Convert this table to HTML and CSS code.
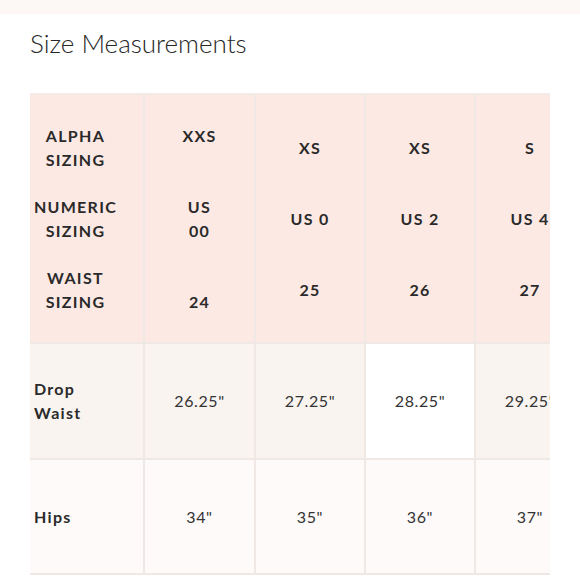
FILE: index.html
```html
<!DOCTYPE html>
<html>
<head>
<meta charset="utf-8">
<link rel="stylesheet" href="styles.css">
</head>
<body>
<div class="topband"></div>
<h1 class="title">Size Measurements</h1>
<div class="table-wrap">
  <div class="grid">
    <div class="cell head first">
      <div class="blk">ALPHA<br>SIZING</div>
      <div class="blk">NUMERIC<br>SIZING</div>
      <div class="blk">WAIST<br>SIZING</div>
    </div>
    <div class="cell head">
      <div class="blk">XXS<br>&nbsp;</div>
      <div class="blk">US<br>00</div>
      <div class="blk">&nbsp;<br>24</div>
    </div>
    <div class="cell head">
      <div class="blk">XS</div>
      <div class="blk">US 0</div>
      <div class="blk">25</div>
    </div>
    <div class="cell head">
      <div class="blk">XS</div>
      <div class="blk">US 2</div>
      <div class="blk">26</div>
    </div>
    <div class="cell head">
      <div class="blk">S</div>
      <div class="blk">US 4</div>
      <div class="blk">27</div>
    </div>

    <div class="cell r2 first label">Drop<br>Waist</div>
    <div class="cell r2 val">26.25"</div>
    <div class="cell r2 val">27.25"</div>
    <div class="cell r2 val white">28.25"</div>
    <div class="cell r2 val">29.25"</div>

    <div class="cell r3 first label">Hips</div>
    <div class="cell r3 val">34"</div>
    <div class="cell r3 val">35"</div>
    <div class="cell r3 val">36"</div>
    <div class="cell r3 val">37"</div>
  </div>
</div>
</body>
</html>
```

FILE: styles.css
```css
html, body {
  margin: 0;
  padding: 0;
  background: #ffffff;
}
body {
  font-family: "Lato", "Open Sans", sans-serif;
  color: #2a2a2a;
}
.topband {
  height: 14px;
  background: #fdf7f5;
}
.title {
  margin: 0;
  padding: 13px 0 0 30px;
  height: 79px;
  box-sizing: border-box;
  font-family: "Lato", sans-serif;
  font-weight: 300;
  font-size: 26px;
  line-height: 32px;
  color: #262626;
}
.table-wrap {
  margin-left: 30px;
  width: 520px;
  overflow: hidden;
  border-top: 2px solid #f3ebe7;
}
.grid {
  display: grid;
  grid-template-columns: 115px 111px 110px 110px 110px;
  grid-template-rows: 249px 116px 115px;
  width: 556px;
}
.cell {
  box-sizing: border-box;
  border-right: 2px solid #efe8e4;
  border-bottom: 2px solid #efe8e4;
  display: flex;
  align-items: center;
  justify-content: center;
  text-align: center;
  font-size: 16px;
  line-height: 24px;
}
.head {
  background: #fde9e4;
  flex-direction: column;
  gap: 23px;
  font-weight: 700;
  letter-spacing: 1.3px;
}
.head.first {
  padding: 0 26px 0 4px;
}
.blk {
  height: 48px;
  display: flex;
  align-items: center;
  justify-content: center;
}
.r2 {
  background: #f9f4f0;
}
.r3 {
  background: #fefaf9;
}
.white {
  background: #ffffff;
}
.label {
  justify-content: flex-start;
  text-align: left;
  padding-left: 4px;
  font-weight: 700;
  letter-spacing: 1.3px;
}
.val {
  font-weight: 400;
  letter-spacing: 0.6px;
  color: #333;
}
```
